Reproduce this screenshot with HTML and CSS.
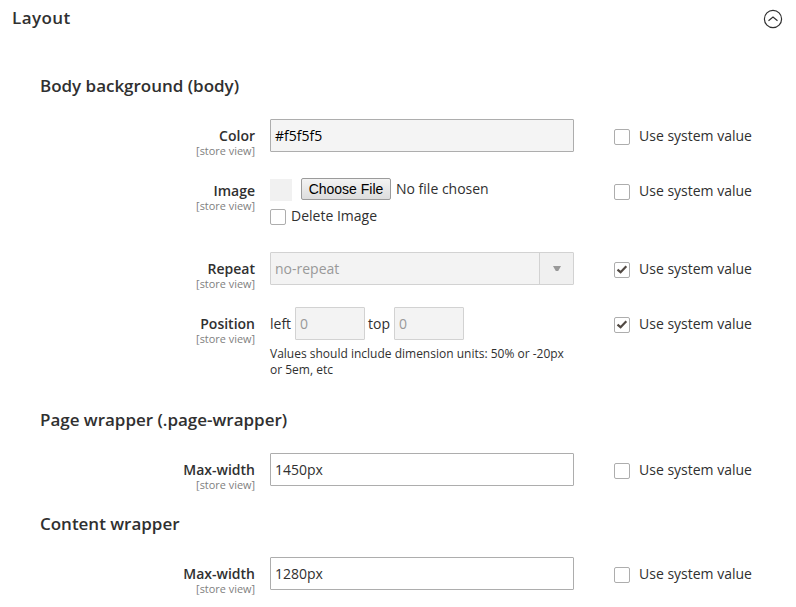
FILE: index.html
```html
<!DOCTYPE html>
<html lang="en">
<head>
<meta charset="utf-8">
<title>Layout</title>
<link rel="stylesheet" href="styles.css">
</head>
<body>
<header class="panel-head">
  <h1>Layout</h1>
  <svg class="toggle" viewBox="0 0 20 20"><circle cx="10" cy="10" r="8.6"/><path d="M5.5 11.7 10 8l4.5 3.7"/></svg>
</header>
<main>
  <section class="group group-body">
    <h2>Body background (body)</h2>
    <div class="field">
      <div class="label"><b>Color</b><small>[store view]</small></div>
      <div class="control"><div class="input shaded">#f5f5f5</div></div>
      <div class="system"><span class="box"></span>Use system value</div>
    </div>
    <div class="field field-image">
      <div class="label"><b>Image</b><small>[store view]</small></div>
      <div class="control">
        <div class="upload"><span class="thumb"></span><button class="file">Choose File</button><span>No file chosen</span></div>
        <div class="delete"><span class="box"></span>Delete Image</div>
      </div>
      <div class="system"><span class="box"></span>Use system value</div>
    </div>
    <div class="field">
      <div class="label"><b>Repeat</b><small>[store view]</small></div>
      <div class="control"><div class="input disabled select"><span>no-repeat</span><span class="arrow"><svg width="8" height="6" viewBox="0 0 8 6"><path d="M0 0h8L5.2 5H2.8z"/></svg></span></div></div>
      <div class="system"><span class="box"><svg viewBox="0 0 14 14"><path d="M2.5 6.6 5.6 9.2 11.3 3.3"/></svg></span>Use system value</div>
    </div>
    <div class="field field-position">
      <div class="label"><b>Position</b><small>[store view]</small></div>
      <div class="control">
        <div class="position"><span class="left">left</span><div class="input disabled">0</div><span class="top">top</span><div class="input disabled">0</div></div>
        <p class="note">Values should include dimension units: 50% or -20px or 5em, etc</p>
      </div>
      <div class="system"><span class="box"><svg viewBox="0 0 14 14"><path d="M2.5 6.6 5.6 9.2 11.3 3.3"/></svg></span>Use system value</div>
    </div>
  </section>
  <section class="group">
    <h2>Page wrapper (.page-wrapper)</h2>
    <div class="field">
      <div class="label"><b>Max-width</b><small>[store view]</small></div>
      <div class="control"><div class="input">1450px</div></div>
      <div class="system"><span class="box"></span>Use system value</div>
    </div>
  </section>
  <section class="group">
    <h2>Content wrapper</h2>
    <div class="field">
      <div class="label"><b>Max-width</b><small>[store view]</small></div>
      <div class="control"><div class="input">1280px</div></div>
      <div class="system"><span class="box"></span>Use system value</div>
    </div>
  </section>
</main>
</body>
</html>
```
FILE: styles.css
```css
* { box-sizing: border-box; }
body {
  margin: 0;
  height: 607px;
  overflow: hidden;
  background: #fff;
  color: #303030;
  font: 14px/20px "Open Sans", sans-serif;
}
h1, h2 { margin: 0; font-size: 17px; font-weight: 600; line-height: 24px; }
h1 { letter-spacing: .42px; }
h2 { margin-bottom: 21px; letter-spacing: -.02px; }
.panel-head {
  display: flex;
  justify-content: space-between;
  height: 74px;
  padding: 6px 13.5px 0 12px;
}
.toggle { width: 20px; height: 20px; margin-top: 3px; fill: none; stroke: #303030; stroke-width: 1.2; }
main { padding-left: 40px; }
.group { display: flex; flex-direction: column; height: 104px; }
.group-body { height: 334px; }
.field {
  display: grid;
  grid-template-columns: 215px 304px 1fr;
  height: 33px;
  margin-bottom: 22px;
  flex: none;
}
.field-image { height: 56px; }
.field-position { height: 72px; margin-bottom: 0; }
.label { display: flex; flex-direction: column; width: 215px; padding-top: 8px; text-align: right; }
.label b { font-weight: 600; line-height: 18px; }
.label small { font-size: 10.9px; line-height: 11px; color: #808080; }
.control { margin-left: 15px; width: 304px; }
.input {
  display: flex;
  align-items: center;
  height: 33px;
  padding: 0 4px;
  border: 1px solid #adadad;
  border-radius: 1px;
}
.shaded { background: #f4f4f4; color: #000; }
.disabled { border-color: #d2d2d2; background: #f3f3f3; color: #999; }
.select { justify-content: space-between; padding-right: 0; }
.arrow { display: flex; align-items: center; justify-content: center; width: 34px; height: 31px; border-left: 1px solid #d2d2d2; background: #f0f0f0; }
.arrow svg { fill: #999; }
.system { display: flex; align-items: center; height: 33px; margin-left: 55px; }
.box { display: block; flex: none; width: 16px; height: 16px; margin: 2px 9px 0 0; border: 1px solid #adadad; border-radius: 2px; background: #fff; }
.box svg { display: block; width: 14px; height: 14px; fill: none; stroke: #514943; stroke-width: 2.2; }
.upload { display: flex; align-items: center; height: 30px; }
.thumb { width: 22px; height: 22px; margin: 2px 9px 0 0; background: #f1f1f1; }
.file {
  width: 90px;
  height: 22px;
  margin-right: 5px;
  padding: 0;
  border: 1px solid #9b9b9b;
  border-radius: 2px;
  background: linear-gradient(#f3f3f3, #dddddd);
  color: #000;
  font: 14px/18px "Liberation Sans", sans-serif;
}
.delete { display: flex; align-items: center; height: 24px; }
.delete .box { margin-right: 5px; }
.position { display: flex; align-items: center; }
.position .input { width: 70px; }
.left { width: 25px; }
.top { width: 29px; padding-left: 3px; }
.note { margin: 6px 0 0; font-size: 12px; line-height: 16px; }
```
